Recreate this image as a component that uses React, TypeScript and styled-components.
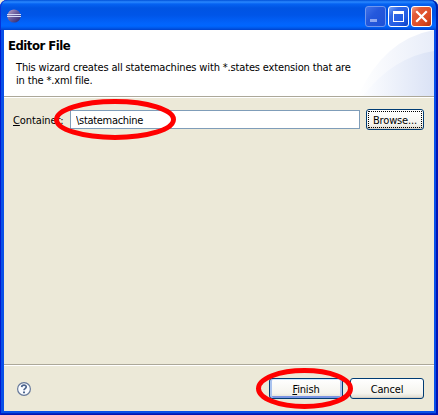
import React from "react";
import styled, { createGlobalStyle } from "styled-components";

const GlobalStyle = createGlobalStyle`
  body { margin: 0; background: #ece9d8; }
  * { box-sizing: border-box; }
`;

const Window = styled.main`
  position: relative;
  width: 438px;
  height: 415px;
  display: flex;
  flex-direction: column;
  overflow: hidden;
  padding: 0 4px 4px;
  border-radius: 7px 7px 0 0;
  background: #0850e8;
  box-shadow: inset 1px 0 #0019cf, inset -2px -1px #0015b4, inset 0 -2px #0029c0;
  color: #000;
  font: 11px/13px "DejaVu Sans Condensed", "DejaVu Sans", sans-serif;
  font-stretch: condensed;
`;

const TitleBar = styled.header`
  flex: 0 0 30px;
  display: flex;
  align-items: center;
  gap: 2px;
  margin: 0 -4px;
  padding: 2px 6px 0 7px;
  border-radius: 7px 7px 0 0;
  background: linear-gradient(#0050d8 0, #2a88ff 2px, #0562f2 4px, #0054e3 8px, #0055e8 15px, #0263fb 23px, #0066ff 26px, #0058ea 28px, #0041cc 30px);
  box-shadow: inset 1px 0 #0831d9, inset -2px 0 #001ea8;
`;

const Spacer = styled.span`
  flex: 1;
`;

const Caption = styled.button<{ $kind: "min" | "max" | "close" }>`
  width: 21px;
  height: 21px;
  padding: 0;
  border: 1px solid ${(p) => (p.$kind === "min" ? "#6f96ee" : "#fff")};
  border-radius: 3px;
  background: ${(p) =>
    p.$kind === "close"
      ? "linear-gradient(135deg, #f0a08a 0, #e25b39 25%, #dc4a22 70%, #b93510 100%)"
      : p.$kind === "max"
        ? "linear-gradient(135deg, #7ba5f6 0, #3168e6 28%, #225be4 70%, #083fc4 100%)"
        : "linear-gradient(135deg, #4173e9 0, #2458dc 40%, #1e50d6 100%)"};
  svg { display: block; }
`;

const Buttons = styled.div`
  display: flex;
  gap: 2px;
`;

const Banner = styled.section`
  flex: 0 0 68px;
  position: relative;
  padding: 8px 0 0 4px;
  background: #fff;
  border-bottom: 1px solid #fff;
  box-shadow: inset 0 -1px #aca899;
`;

const Swoosh = styled.svg`
  position: absolute;
  right: 0;
  top: 0;
`;

const Heading = styled.h1`
  position: relative;
  margin: 0;
  font: bold 13px/15px "DejaVu Sans Condensed", "DejaVu Sans", sans-serif;
  font-stretch: condensed;
  letter-spacing: -0.5px;
`;

const Description = styled.p`
  position: relative;
  margin: 8px 0 0 8px;
  white-space: nowrap;
`;

const Line = styled.span<{ $spacing: number }>`
  display: block;
  letter-spacing: ${(p) => p.$spacing}px;
`;

const Body = styled.section`
  flex: 1;
  padding: 11px 10px 0 9px;
  background: #ece9d8;
`;

const Field = styled.div`
  display: flex;
  align-items: center;
`;

const Label = styled.label`
  width: 57px;
  padding-top: 1px;
  white-space: nowrap;
  letter-spacing: -0.1px;
`;

const Input = styled.input`
  width: 290px;
  height: 19px;
  margin-right: 6px;
  padding: 1px 5px 0;
  border: 1px solid #7f9db9;
  border-radius: 0;
  background: #fff;
  color: #000;
  font: inherit;
  letter-spacing: -0.3px;
  outline: 0;
`;

const Button = styled.button<{ $w: number; $look?: "focus" | "default" }>`
  width: ${(p) => p.$w}px;
  height: 21px;
  padding: 1px 0 0;
  border: 1px solid #003c74;
  border-radius: 3px;
  background: linear-gradient(#fff, #f5f4ee 75%, #dedace);
  box-shadow: ${(p) =>
    p.$look === "default" ? "inset 2px 0 #a9c2ee, inset -2px 0 #a9c2ee, inset 0 1px #cee7ff, inset 0 -2px #7994e3" : "inset 0 -1px #d6d0c5"};
  color: #000;
  font: inherit;
  letter-spacing: -0.15px;
  white-space: nowrap;
  outline: ${(p) => (p.$look === "focus" ? "1px dotted #000" : "0")};
  outline-offset: -3px;
`;

const Footer = styled.footer`
  flex: 0 0 47px;
  display: flex;
  align-items: center;
  padding: 1px 10px 0 12px;
  background: #ece9d8;
  border-top: 1px solid #aca899;
  box-shadow: inset 0 1px #fff;
`;

const Actions = styled.div`
  display: flex;
  gap: 7px;
`;

const Ring = styled.svg<{ $x: number; $y: number }>`
  position: absolute;
  left: ${(p) => p.$x}px;
  top: ${(p) => p.$y}px;
  pointer-events: none;
  fill: none;
  stroke: #f00;
  stroke-width: 5px;
`;

const EclipseIcon = () => (
  <svg width="15" height="14" viewBox="0 0 15 14">
    <defs>
      <linearGradient id="globe" x2="1" y2="1">
        <stop offset="0" stopColor="#c3a8c8" />
        <stop offset=".45" stopColor="#6b609f" />
        <stop offset="1" stopColor="#28216c" />
      </linearGradient>
    </defs>
    <circle cx="7" cy="7" r="6.6" fill="url(#globe)" />
    <path d="M0 5.5h14M0 7.5h14" stroke="#d3daf6" />
  </svg>
);

const HelpIcon = () => (
  <svg width="16" height="16" viewBox="0 0 16 16">
    <circle cx="8" cy="8" r="6.4" fill="#fafcff" stroke="#66799a" strokeWidth="1.2" />
    <path d="M5.7 6.1C5.8 3.4 10.5 3.6 10.2 6.2C10 7.7 8 7.6 8 9.3" fill="none" stroke="#4d658d" strokeWidth="1.7" />
    <path d="M7 10.4h2v1.8H7z" fill="#4d658d" />
  </svg>
);

export default function App() {
  return (
    <>
      <GlobalStyle />
      <Window>
        <TitleBar>
          <EclipseIcon />
          <Spacer />
          <Buttons>
            <Caption $kind="min" aria-label="Minimize">
              <svg width="19" height="19"><path d="M4 12h7v3H4z" fill="#8da7f0" /></svg>
            </Caption>
            <Caption $kind="max" aria-label="Maximize">
              <svg width="19" height="19"><path d="M4 4h11v11H4zM5 7v7h9V7z" fill="#fff" fillRule="evenodd" /></svg>
            </Caption>
            <Caption $kind="close" aria-label="Close">
              <svg width="19" height="19"><path d="M5 5l9 9M14 5l-9 9" stroke="#fff" strokeWidth="2.2" strokeLinecap="square" /></svg>
            </Caption>
          </Buttons>
        </TitleBar>
        <Banner>
          <Swoosh width="76" height="66" viewBox="0 0 76 66">
            <defs>
              <linearGradient id="outer">
                <stop offset="0" stopColor="#fff" />
                <stop offset="1" stopColor="#e8edf9" />
              </linearGradient>
              <linearGradient id="inner">
                <stop offset="0" stopColor="#fcfdff" />
                <stop offset="1" stopColor="#dae2f5" />
              </linearGradient>
            </defs>
            <path d="M0 66Q26 9 76 0V66z" fill="url(#outer)" />
            <path d="M5 66Q35 27 76 21V66z" fill="url(#inner)" />
          </Swoosh>
          <Heading>Editor File</Heading>
          <Description>
            <Line $spacing={-0.15}>This wizard creates all statemachines with *.states extension that are</Line>
            <Line $spacing={-0.15}>in the *.xml file.</Line>
          </Description>
        </Banner>
        <Body>
          <Field>
            <Label htmlFor="container"><u>C</u>ontainer:</Label>
            <Input id="container" defaultValue="\statemachine" />
            <Button $w={58} $look="focus">Browse...</Button>
          </Field>
        </Body>
        <Footer>
          <HelpIcon />
          <Spacer />
          <Actions>
            <Button $w={74} $look="default"><u>F</u>inish</Button>
            <Button $w={74}>Cancel</Button>
          </Actions>
        </Footer>
        <Ring $x={54} $y={99} width="122" height="42"><ellipse cx="61" cy="20.5" rx="58.5" ry="18" /></Ring>
        <Ring $x={256} $y={368} width="98" height="42"><ellipse cx="48.5" cy="20.5" rx="46" ry="18" /></Ring>
      </Window>
    </>
  );
}
